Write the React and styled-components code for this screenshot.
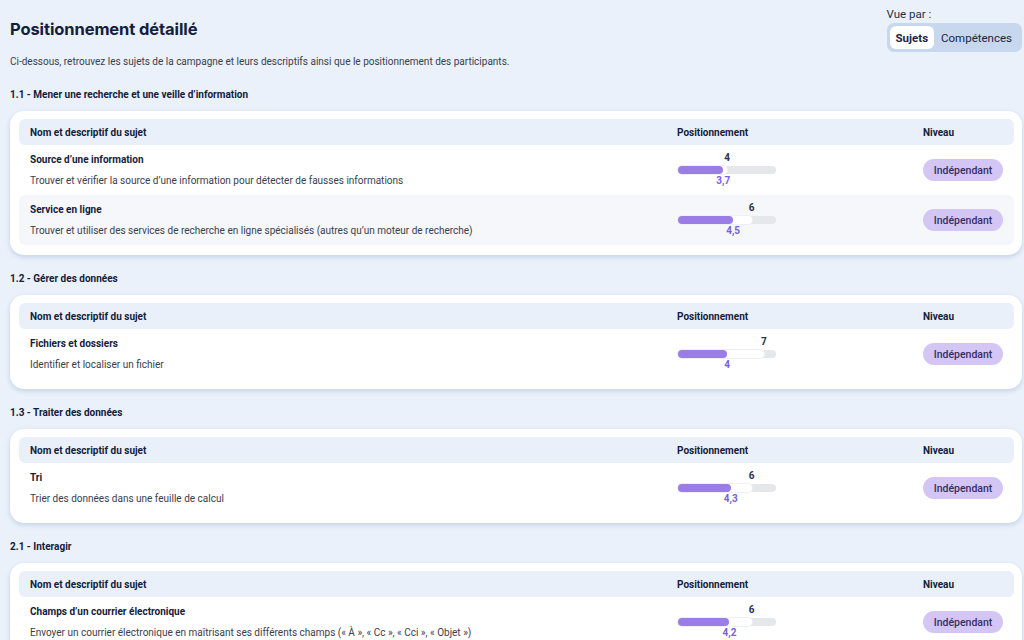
import React from 'react';
import styled, { createGlobalStyle } from 'styled-components';

const GlobalStyle = createGlobalStyle`
	html, body {
		margin: 0;
		padding: 0;
		background: #eaf1fa;
		font-family: Roboto, "Liberation Sans", Arial, sans-serif;
		color: #1b2540;
	}
`;

const MAX = 8;

const sections = [
	{
		title: '1.1 - Mener une recherche et une veille d\u2019information',
		subjects: [
			{ name: 'Source d\u2019une information', desc: 'Trouver et vérifier la source d\u2019une information pour détecter de fausses informations', max: 4, avg: 3.7 },
			{ name: 'Service en ligne', desc: 'Trouver et utiliser des services de recherche en ligne spécialisés (autres qu\u2019un moteur de recherche)', max: 6, avg: 4.5 },
		],
	},
	{
		title: '1.2 - Gérer des données',
		subjects: [
			{ name: 'Fichiers et dossiers', desc: 'Identifier et localiser un fichier', max: 7, avg: 4 },
		],
	},
	{
		title: '1.3 - Traiter des données',
		subjects: [
			{ name: 'Tri', desc: 'Trier des données dans une feuille de calcul', max: 6, avg: 4.3 },
		],
	},
	{
		title: '2.1 - Interagir',
		subjects: [
			{ name: 'Champs d\u2019un courrier électronique', desc: 'Envoyer un courrier électronique en maîtrisant ses différents champs (« À », « Cc », « Cci », « Objet »)', max: 6, avg: 4.2 },
		],
	},
];

const Page = styled.div`
	padding: 0 2px 20px 10px;
`;

const Top = styled.div`
	display: flex;
	justify-content: space-between;
	align-items: flex-start;
`;

const Title = styled.h1`
	margin: 16px 0 0;
	font-family: Inter, "Open Sans", sans-serif;
	font-size: 16.5px;
	font-weight: 700;
	line-height: 26px;
	color: #14203a;
	letter-spacing: -0.1px;
`;

const Intro = styled.p`
	margin: 12px 0 0;
	font-size: 10px;
	line-height: 16px;
	color: #39404d;
`;

const ViewBy = styled.div`
	margin-top: 7px;
	display: flex;
	flex-direction: column;
	gap: 2px;
`;

const ViewLabel = styled.div`
	font-size: 11.5px;
	line-height: 14px;
	color: #262f45;
`;

const Toggle = styled.div`
	display: flex;
	background: #c7d8ee;
	border-radius: 7px;
	padding: 3px;
`;

const ToggleButton = styled.div`
	height: 23px;
	display: flex;
	align-items: center;
	padding: 0 ${(p) => (p.active ? '6px' : '7px')};
	border-radius: 6px;
	font-size: 11.5px;
	font-weight: ${(p) => (p.active ? 700 : 400)};
	background: ${(p) => (p.active ? '#fff' : 'transparent')};
	color: #1b2540;
`;

const SectionTitle = styled.h2`
	margin: ${(p) => (p.first ? '18px' : '17px')} 0 9px;
	font-size: 10px;
	line-height: 14px;
	font-weight: 700;
	color: #14203a;
`;

const Card = styled.div`
	background: #fff;
	border-radius: 14px;
	padding: 8px 8px 10px 9px;
	box-shadow: 0 2px 5px rgba(120, 150, 200, 0.35);
`;

const Grid = styled.div`
	display: grid;
	grid-template-columns: 1fr 246px 80px;
	align-items: center;
	padding: 0 11px;
	border-radius: 6px;
`;

const HeaderRow = styled(Grid)`
	height: 26px;
	background: #e9f0f9;
	font-size: 10px;
	font-weight: 700;
	color: #14203a;
`;

const Row = styled(Grid)`
	height: 50px;
	background: ${(p) => (p.alt ? '#f5f7fa' : '#fff')};
`;

const SubjectName = styled.div`
	font-size: 10px;
	font-weight: 700;
	line-height: 14px;
	color: #14203a;
`;

const SubjectDesc = styled.div`
	margin-top: 7px;
	font-size: 10px;
	line-height: 14px;
	color: #39404d;
`;

const Gauge = styled.div`
	position: relative;
	width: 98px;
	height: 8px;
	margin-left: 1px;
	border-radius: 4px;
	background: #e5e7eb;
`;

const Fill = styled.div`
	position: absolute;
	left: 0;
	top: 0;
	bottom: 0;
	border-radius: 4px;
	background: ${(p) => p.color};
`;

const GaugeLabel = styled.span`
	position: absolute;
	transform: translateX(-50%);
	font-size: 10px;
	font-weight: 700;
	line-height: 12px;
	white-space: nowrap;
	color: ${(p) => (p.avg ? '#7a5de0' : '#2a3246')};
	${(p) => (p.avg ? 'top: 9px;' : 'bottom: 10px;')}
`;

const Badge = styled.div`
	height: 22px;
	border-radius: 11px;
	background: #d3c6f4;
	color: #372d66;
	font-size: 10.5px;
	font-weight: 500;
	display: flex;
	align-items: center;
	justify-content: center;
`;

const fmt = (n) => String(n).replace('.', ',');

const Positioning = ({ max, avg }) => (
	<Gauge>
		<Fill color="#fff" style={{ width: `${(max / MAX) * 100}%`, boxShadow: '0 0 0 1px #eef0f3' }} />
		<Fill color="#9a7de6" style={{ width: `${(avg / MAX) * 100}%` }} />
		<GaugeLabel style={{ left: `${(max / MAX) * 100}%` }}>{fmt(max)}</GaugeLabel>
		<GaugeLabel avg style={{ left: `${(avg / MAX) * 100}%` }}>{fmt(avg)}</GaugeLabel>
	</Gauge>
);

const App = () => (
	<>
		<GlobalStyle />
		<Page>
			<Top>
				<div>
					<Title>Positionnement détaillé</Title>
					<Intro>Ci-dessous, retrouvez les sujets de la campagne et leurs descriptifs ainsi que le positionnement des participants.</Intro>
				</div>
				<ViewBy>
					<ViewLabel>Vue par :</ViewLabel>
					<Toggle>
						<ToggleButton active>Sujets</ToggleButton>
						<ToggleButton>Compétences</ToggleButton>
					</Toggle>
				</ViewBy>
			</Top>
			{sections.map((section, i) => (
				<React.Fragment key={section.title}>
					<SectionTitle first={i === 0}>{section.title}</SectionTitle>
					<Card>
						<HeaderRow>
							<div>Nom et descriptif du sujet</div>
							<div>Positionnement</div>
							<div>Niveau</div>
						</HeaderRow>
						{section.subjects.map((s, j) => (
							<Row key={s.name} alt={j % 2 === 1}>
								<div>
									<SubjectName>{s.name}</SubjectName>
									<SubjectDesc>{s.desc}</SubjectDesc>
								</div>
								<Positioning max={s.max} avg={s.avg} />
								<Badge>Indépendant</Badge>
							</Row>
						))}
					</Card>
				</React.Fragment>
			))}
		</Page>
	</>
);

export default App;
